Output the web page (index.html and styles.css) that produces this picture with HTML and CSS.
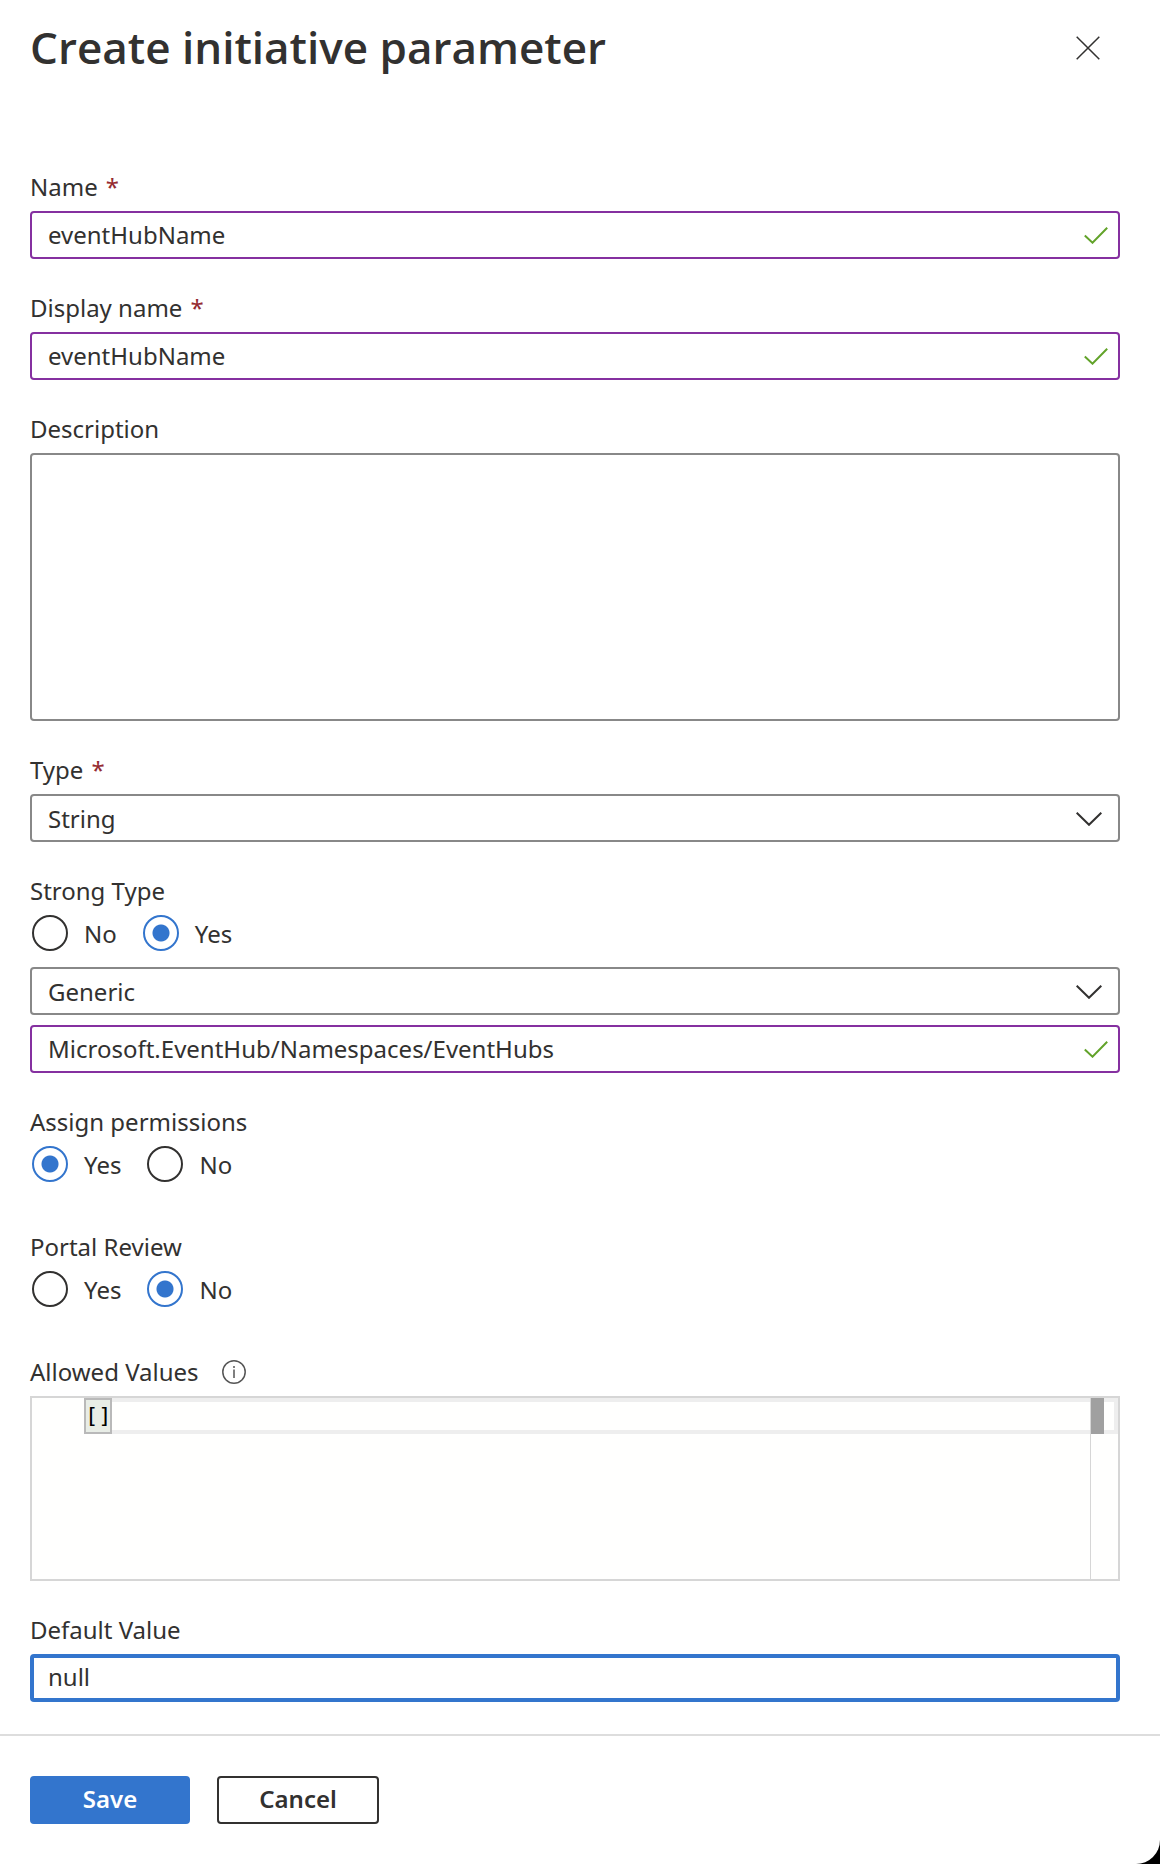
FILE: index.html
```
<!DOCTYPE html>
<html lang="en">
<head>
  <meta charset="UTF-8">
  <meta name="viewport" content="width=device-width, initial-scale=1.0">
  <title>Create initiative parameter</title>
  <link rel="stylesheet" href="styles.css">
</head>
<body>
  <form class="panel">
    <header class="panel-header">
      <h1>Create initiative parameter</h1>
      <button type="button" class="close" aria-label="Close">
        <svg width="24" height="24" viewBox="0 0 24 24"><path d="M.7.7l22.6 22.6M23.3.7L.7 23.3"/></svg>
      </button>
    </header>

    <div class="panel-body">
      <div class="field">
        <label class="field-label" for="name">Name <span class="required">*</span></label>
        <div class="control">
          <input type="text" class="box changed" id="name" value="eventHubName">
          <svg class="check" width="24" height="17" viewBox="0 0 24 17"><path d="M.8 8.5l7.7 7.2L23.2.8"/></svg>
        </div>
      </div>

      <div class="field">
        <label class="field-label" for="display-name">Display name <span class="required">*</span></label>
        <div class="control">
          <input type="text" class="box changed" id="display-name" value="eventHubName">
          <svg class="check" width="24" height="17" viewBox="0 0 24 17"><path d="M.8 8.5l7.7 7.2L23.2.8"/></svg>
        </div>
      </div>

      <div class="field">
        <label class="field-label" for="description">Description</label>
        <textarea class="box description" id="description"></textarea>
      </div>

      <div class="field">
        <label class="field-label" for="type">Type <span class="required">*</span></label>
        <div class="control">
          <select class="box" id="type">
            <option>String</option>
          </select>
          <svg class="chevron" width="26" height="14" viewBox="0 0 26 14"><path d="M.7.7L13 12.8 25.3.7"/></svg>
        </div>
      </div>

      <div class="field">
        <div class="field-label" id="strong-type">Strong Type</div>
        <div class="radios" role="radiogroup" aria-labelledby="strong-type">
          <label><input type="radio" name="strong-type">No</label>
          <label><input type="radio" name="strong-type" checked>Yes</label>
        </div>
        <div class="stack">
          <div class="control">
            <select class="box" aria-label="Strong type kind">
              <option>Generic</option>
            </select>
            <svg class="chevron" width="26" height="14" viewBox="0 0 26 14"><path d="M.7.7L13 12.8 25.3.7"/></svg>
          </div>
          <div class="control">
            <input type="text" class="box changed" aria-label="Resource type" value="Microsoft.EventHub/Namespaces/EventHubs">
            <svg class="check" width="24" height="17" viewBox="0 0 24 17"><path d="M.8 8.5l7.7 7.2L23.2.8"/></svg>
          </div>
        </div>
      </div>

      <div class="field">
        <div class="field-label" id="assign">Assign permissions</div>
        <div class="radios" role="radiogroup" aria-labelledby="assign">
          <label><input type="radio" name="assign" checked>Yes</label>
          <label><input type="radio" name="assign">No</label>
        </div>
      </div>

      <div class="field">
        <div class="field-label" id="review">Portal Review</div>
        <div class="radios" role="radiogroup" aria-labelledby="review">
          <label><input type="radio" name="review">Yes</label>
          <label><input type="radio" name="review" checked>No</label>
        </div>
      </div>

      <div class="field">
        <label class="field-label" for="allowed">
          Allowed Values
          <svg class="info" width="24" height="24" viewBox="0 0 24 24"><circle cx="12" cy="12" r="11.2"/><path d="M12 9.5V18M12 6v2"/></svg>
        </label>
        <div class="editor">
          <div class="current-line"></div>
          <div class="bracket-match"></div>
          <div class="ruler"></div>
          <textarea id="allowed" spellcheck="false">[]</textarea>
        </div>
      </div>

      <div class="field">
        <label class="field-label" for="default">Default Value</label>
        <input type="text" class="box active" id="default" value="null">
      </div>
    </div>

    <footer class="panel-footer">
      <button type="submit" class="btn primary">Save</button>
      <button type="button" class="btn">Cancel</button>
    </footer>
  </form>
</body>
</html>
```
FILE: styles.css
```
* {
  box-sizing: border-box;
}

body {
  margin: 0;
  background-color: #000;
  color: #323130;
  font-family: "Noto Sans", "Open Sans", sans-serif;
  font-size: 24px;
}

input,
select,
textarea,
button {
  font: inherit;
  color: inherit;
}

svg {
  fill: none;
  stroke: #323130;
}

.panel {
  min-height: 100vh;
  background-color: #fff;
  border-bottom-right-radius: 24px;
}

.panel-header {
  display: flex;
  justify-content: space-between;
  align-items: center;
  height: 96px;
  padding: 0 52px 0 30px;
}

h1 {
  margin: 0;
  padding-bottom: 2px;
  font-family: "Open Sans", sans-serif;
  font-size: 44px;
  font-weight: 600;
}

.close {
  display: flex;
  padding: 8px;
  border: 0;
  background: none;
  cursor: pointer;
}

.close svg {
  stroke-width: 1.5;
}

.panel-body {
  display: flex;
  flex-direction: column;
  gap: 32px;
  padding: 74px 40px 32px 30px;
}

.field-label {
  display: flex;
  align-items: center;
  gap: 8px;
  height: 34px;
  margin-bottom: 7px;
  line-height: 34px;
}

.required {
  color: #952b31;
}

.info {
  margin-left: 15px;
  stroke: #555;
  stroke-width: 1.5;
}

.control {
  position: relative;
}

.box {
  display: block;
  width: 100%;
  height: 48px;
  padding: 0 16px 2px;
  border: 2px solid #888;
  border-radius: 4px;
  background-color: #fff;
  outline: none;
}

select.box {
  padding: 0 16px;
  appearance: none;
}

.box.changed {
  border-color: #8530a0;
}

.box.active {
  padding: 0 14px 4px;
  border: 4px solid #3375cd;
}

.box.description {
  height: 268px;
  resize: none;
}

.check,
.chevron {
  position: absolute;
  top: 16px;
  right: 12px;
  pointer-events: none;
}

.check {
  stroke: #62a32a;
  stroke-width: 2;
}

.chevron {
  top: 18px;
  right: 18px;
  stroke-width: 2;
}

.radios {
  display: flex;
  gap: 26px;
  padding: 0 2px;
  margin-bottom: 16px;
}

.radios label {
  display: flex;
  align-items: center;
  gap: 16px;
  height: 36px;
}

.radios input {
  appearance: none;
  width: 36px;
  height: 36px;
  margin: 0;
  border: 2px solid #323130;
  border-radius: 50%;
}

.radios input:checked {
  border-color: #3375cd;
  background: radial-gradient(circle, #3375cd 8px, #fff 9px);
}

.stack {
  display: flex;
  flex-direction: column;
  gap: 10px;
}

/* allowed values editor */
.editor {
  position: relative;
  height: 185px;
  border: 2px solid #d6d6d6;
  background-color: #fffffe;
}

.editor textarea {
  position: relative;
  display: block;
  width: 100%;
  height: 100%;
  padding: 0 28px 0 53px;
  border: 0;
  background: none;
  outline: none;
  resize: none;
  color: #000;
  font-family: "DejaVu Sans Mono", monospace;
  font-size: 22px;
  line-height: 36px;
}

.current-line {
  position: absolute;
  top: 0;
  left: 52px;
  right: 0;
  height: 36px;
  border: 4px solid #eee;
}

.bracket-match {
  position: absolute;
  top: 0;
  left: 52px;
  width: 28px;
  height: 36px;
  border: 2px solid #b9b9b9;
  background-color: #e8ede6;
}

.ruler {
  position: absolute;
  top: 0;
  right: 0;
  bottom: 0;
  width: 28px;
  border-left: 1px solid #d6d6d6;
}

.ruler::before {
  content: "";
  display: block;
  width: 13px;
  height: 36px;
  background-color: #a0a0a0;
}

.panel-footer {
  display: flex;
  gap: 27px;
  padding: 40px 30px;
  border-top: 2px solid #ddd;
}

.btn {
  min-width: 162px;
  height: 48px;
  padding: 0 24px 2px;
  border: 2px solid #323130;
  border-radius: 4px;
  background-color: #fff;
  font-weight: 600;
  line-height: 34px;
  cursor: pointer;
}

.btn.primary {
  min-width: 160px;
  border-color: #3375cd;
  background-color: #3375cd;
  color: #fff;
}
```
